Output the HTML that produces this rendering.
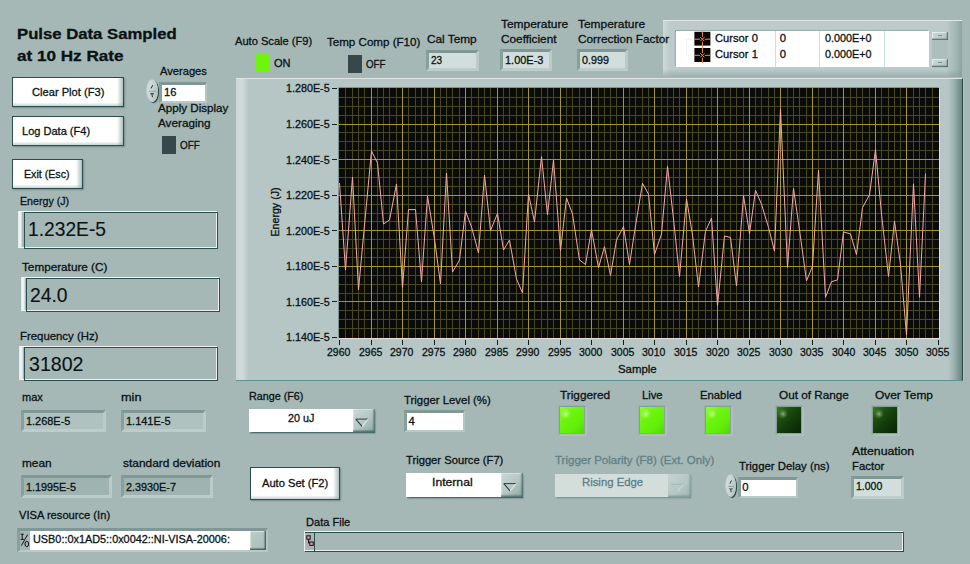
<!DOCTYPE html>
<html lang="en">
<head>
<meta charset="utf-8">
<title>Pulse Data Sampled at 10 Hz Rate</title>
<style>
html,body{margin:0;padding:0}
body{width:970px;height:564px;overflow:hidden;background:#a5b8b6;font-family:"Liberation Sans", sans-serif;color:#0a1214}
#panel{position:relative;width:970px;height:564px;overflow:hidden;background:#a5b8b6}
#panel div,#panel i,#panel span,#panel svg{position:absolute;display:block;box-sizing:border-box}
.t{line-height:1;white-space:nowrap;font-style:normal;transform-origin:0 0;-webkit-text-stroke:.3px currentColor;z-index:5}
/* push buttons */
.btn{background:
  linear-gradient(to right,rgba(140,165,163,0) calc(100% - 6px),rgba(140,165,163,.7)),
  linear-gradient(to bottom,rgba(140,165,163,0) calc(100% - 3.5px),rgba(140,165,163,.5)),#fff;
  border:1.4px solid #2c4d4e;box-shadow:1px 1px 1.5px rgba(60,90,90,.45)}
/* etched indicators */
.ind .strip{left:0;top:0;width:4px;bottom:1px;background:linear-gradient(to right,#dfe7e5,#f3f6f5 45%,#eaefee 70%,#c5d2cf)}
.ind .lt{left:0;top:0;right:1px;bottom:1px;border:1px solid #eef3f2;border-left:none}
.ind .dk{top:1px;right:0;bottom:0;border:1.3px solid #2c4d4e}
/* sunken numerics */
.num{border-style:solid;border-width:3px;border-color:#7f9896 #bccac8 #bfcdca #86a09d;background:#b0c2bf}
.num.dkf{background:#9fb3b0}
.num.ltf{background:#d2dedb}
.inp{border-style:solid;border-width:3px 2.9px 2.8px 3px;border-color:#7f9896 #b4c5c2 #b9c9c6 #86a09d;background:#fff}
.led{box-shadow:0 0 0 1.3px rgba(125,150,147,.75),1.2px 1.2px 0 1.3px rgba(196,210,207,.7)}
.led.on{background:linear-gradient(135deg,#8cff2a 0%,#6df50e 35%,#62ee08 70%,#4fd807 100%)}
.led.off{background:linear-gradient(135deg,#3a8420 0%,#1e5410 25%,#133c09 55%,#0a2404 100%)}
.led.off i{opacity:.85}
.led i{left:1px;top:2px;width:10px;height:10px;border-radius:50%;background:radial-gradient(closest-side,rgba(255,255,255,.6),rgba(255,255,255,.25) 45%,rgba(255,255,255,0))}
.spin{border-radius:50%;background:linear-gradient(100deg,#d9e2e0,#c3d0cd 60%,#a9bbb8);box-shadow:1.1px 1px .9px rgba(22,50,50,.9),-0.5px -0.5px 1px rgba(225,235,233,.8)}
.ring{background:#fff;box-shadow:0.5px 1.5px 1.5px rgba(45,80,80,.75)}
.ring .rb{right:0;top:0;bottom:0;background:linear-gradient(135deg,#ccd8d5 0%,#b4c5c2 55%,#8ea5a2 100%);box-shadow:inset -1.5px -1.5px 1.5px rgba(50,85,85,.7),inset 1px 1px 1px rgba(235,242,240,.6)}
.ring.dis{background:#d3dedb;box-shadow:0.5px 1.5px 1.5px rgba(90,125,125,.55)}
.ring.dis .rb{background:linear-gradient(135deg,#c7d4d1,#b5c6c3 60%,#a0b5b2);box-shadow:inset -1.5px -1.5px 1.5px rgba(90,125,125,.5)}
/* graph */
#graph{left:235.6px;top:78px;width:727.4px;height:303px;background:
  linear-gradient(to right,#cbd6d4 0,#d1dbdb 6px,#c6d3d2 9px,#b5c6c5 12.5px,#b5c6c5 calc(100% - 14px),#9db1af calc(100% - 8px),#6e8786 calc(100% - 1px));
  border-top:1.5px solid #dde6e4;border-bottom:1.5px solid #5f9191;border-right:1.2px solid #294a4b;box-shadow:1px 0 0 rgba(205,190,190,.6)}
#plot{left:338.5px;top:87.6px;width:600.5px;height:250.2px;background:#0b0c0a;box-shadow:1px 1px 0 #e9dcdc,-0.6px -0.6px 0 #56706f}
.tk{background:#10201f}
#legend{left:663px;top:19.8px;width:298.5px;height:57.4px;background:
  linear-gradient(to bottom,rgba(130,155,152,0) calc(100% - 8px),rgba(130,155,152,.55) 100%),
  linear-gradient(to right,#cfdad8 0,#bccbc9 7px,#bccbc9 calc(100% - 16px),#9fb4b1 calc(100% - 5px),#8ca3a0 100%);
  border-top:1.5px solid #dfe8e6}
#legend .tb{left:12.6px;top:10.1px;width:253.4px;height:36.4px;background:#fff;box-shadow:-1px -1.5px 1px rgba(90,125,125,.7)}
#legend .cl{top:0;bottom:0;width:1px;background:#bfe3e6}
#legend .sb{left:269px;width:15.6px;height:8.6px;background:linear-gradient(135deg,#ccd8d5,#b3c4c1);box-shadow:inset -1.2px -1.2px 1px rgba(50,85,85,.75),inset 1px 1px 1px rgba(235,242,240,.8)}
#legend .sb i{left:5.5px;top:3.4px;width:4px;height:1px;background:#7d9795}
</style>
</head>
<body>
<div id="panel">

<!-- title -->
<span class="t" style="left:17.4px;top:26.9px;font-size:14.3px;transform:scaleX(1.168);font-weight:700">Pulse Data Sampled</span>
<span class="t" style="left:17.4px;top:49.2px;font-size:14.3px;transform:scaleX(1.197);font-weight:700">at 10 Hz Rate</span>

<!-- push buttons -->
<div class="btn" style="left:12px;top:77.2px;width:112.3px;height:29.8px"></div><span class="t" style="left:31.6px;top:87.13px;font-size:11.3px;transform:scaleX(0.985)">Clear Plot (F3)</span>
<div class="btn" style="left:12px;top:116.4px;width:112.3px;height:29.4px"></div><span class="t" style="left:21.7px;top:125.53px;font-size:11.3px;transform:scaleX(0.977)">Log Data (F4)</span>
<div class="btn" style="left:12px;top:159px;width:71px;height:30px"></div><span class="t" style="left:24.2px;top:169.23px;font-size:11.3px;transform:scaleX(0.943)">Exit (Esc)</span>
<div class="btn" style="left:250px;top:466.8px;width:90.2px;height:33.2px"></div><span class="t" style="left:261.7px;top:478.03px;font-size:11.3px;transform:scaleX(0.985)">Auto Set (F2)</span>

<!-- averages -->
<span class="t" style="left:159.8px;top:65.53px;font-size:11.3px;transform:scaleX(0.986)">Averages</span>
<div class="spin" style="left:147.3px;top:80.2px;width:10.699999999999989px;height:22.0px"><svg width="10.699999999999989" height="22.0" viewBox="0 0 11 22"><path d="M2 11.2h7" stroke="#7d9593" stroke-width=".8"/><path d="M3.6 8.2 5.7 4.6 6.4 5 4.6 8.4zM3.4 13.4h3.8v.9H5.6l.5 3-.9.2-.7-3.2H3.4z" fill="#1d3436"/></svg></div>
<div class="inp" style="left:159px;top:81.6px;width:48px;height:21.8px"></div><span class="t" style="left:163.5px;top:86.73px;font-size:11.3px;transform:scaleX(0.985)">16</span>
<span class="t" style="left:157.9px;top:102.83px;font-size:11.3px;transform:scaleX(1.028)">Apply Display</span>
<span class="t" style="left:157.7px;top:118.33px;font-size:11.3px;transform:scaleX(1.038)">Averaging</span>
<div class="sq" style="left:162px;top:136.2px;width:14px;height:17.5px;background:#37474a"></div><span class="t" style="left:179.6px;top:139.73px;font-size:11.3px;transform:scaleX(0.877)">OFF</span>

<!-- big indicators -->
<span class="t" style="left:19.9px;top:195.93px;font-size:11.3px;transform:scaleX(0.942)">Energy (J)</span>
<div class="ind" style="left:18.4px;top:211px;width:200.0px;height:38px"><i class="strip"></i><i class="lt"></i><i class="dk" style="left:5.600000000000001px"></i></div><span class="t" style="left:28.23px;top:219.84px;font-size:19.8px;transform:scaleX(0.971);-webkit-text-stroke-width:.12px">1.232E-5</span>
<span class="t" style="left:21.8px;top:261.93px;font-size:11.3px;transform:scaleX(1.038)">Temperature (C)</span>
<div class="ind" style="left:20.8px;top:277px;width:199.6px;height:35px"><i class="strip"></i><i class="lt"></i><i class="dk" style="left:5.199999999999999px"></i></div><span class="t" style="left:30.12px;top:286.04px;font-size:19.8px;transform:scaleX(0.976);-webkit-text-stroke-width:.12px">24.0</span>
<span class="t" style="left:19.7px;top:330.93px;font-size:11.3px;transform:scaleX(1.007)">Frequency (Hz)</span>
<div class="ind" style="left:18.6px;top:346px;width:199.8px;height:35px"><i class="strip"></i><i class="lt"></i><i class="dk" style="left:5.599999999999998px"></i></div><span class="t" style="left:28.6px;top:354.74px;font-size:19.8px;transform:scaleX(0.989);-webkit-text-stroke-width:.12px">31802</span>

<!-- statistics -->
<span class="t" style="left:21.8px;top:391.93px;font-size:11.3px;transform:scaleX(0.973)">max</span><span class="t" style="left:121.4px;top:391.93px;font-size:11.3px;transform:scaleX(1.127)">min</span>
<div class="num" style="left:20.5px;top:410.3px;width:85.1px;height:21.69999999999999px"></div><span class="t" style="left:25.5px;top:416.13px;font-size:11.3px;transform:scaleX(0.968)">1.268E-5</span>
<div class="num" style="left:120.5px;top:410.3px;width:85.30000000000001px;height:21.69999999999999px"></div><span class="t" style="left:125.5px;top:416.13px;font-size:11.3px;transform:scaleX(0.972)">1.141E-5</span>
<span class="t" style="left:22.4px;top:457.83px;font-size:11.3px;transform:scaleX(1.044)">mean</span><span class="t" style="left:123.4px;top:457.83px;font-size:11.3px;transform:scaleX(1.054)">standard deviation</span>
<div class="num dkf" style="left:21.4px;top:475.4px;width:91.0px;height:22.600000000000023px"></div><span class="t" style="left:25.5px;top:481.63px;font-size:11.3px;transform:scaleX(0.957)">1.1995E-5</span>
<div class="num dkf" style="left:121.4px;top:475.4px;width:91.79999999999998px;height:22.80000000000001px"></div><span class="t" style="left:125.5px;top:481.63px;font-size:11.3px;transform:scaleX(0.957)">2.3930E-7</span>

<!-- VISA resource -->
<span class="t" style="left:18.5px;top:510.13px;font-size:11.3px;transform:scaleX(0.987)">VISA resource (In)</span>
<div class="inp" style="left:17px;top:527.6px;width:251px;height:24.6px;background:#a5b8b6">
  <svg style="left:-0.6px;top:1.6px" width="12" height="17" viewBox="0 0 12 17"><path d="M1.6 2.2h3.2M3.2 2.2v5.2M1.6 7.4h3.2" stroke="#111" stroke-width="1" fill="none"/><path d="M8.6 2.6 2.4 13.6" stroke="#111" stroke-width="1"/><ellipse cx="7.8" cy="12" rx="1.8" ry="2.7" fill="none" stroke="#111" stroke-width="1"/></svg>
  <div style="left:10.4px;top:0.8px;width:219.2px;height:18.6px;background:#fff"></div>
  <div style="left:229.6px;top:0.8px;width:16.6px;height:18.8px;background:linear-gradient(135deg,#bccbc8,#aabcb9);box-shadow:inset -1.4px -1.4px 1px rgba(40,75,75,.8),inset 1px 1px 1px rgba(235,242,240,.7)"></div>
</div>
<span class="t" style="left:32.9px;top:534.23px;font-size:11.3px;transform:scaleX(0.962)">USB0::0x1AD5::0x0042::NI-VISA-20006:</span>

<!-- top row -->
<span class="t" style="left:234.7px;top:35.83px;font-size:11.3px;transform:scaleX(0.984)">Auto Scale (F9)</span>
<div class="sq" style="left:255.8px;top:53.6px;width:14.5px;height:18.5px;background:#6ef40d"></div><span class="t" style="left:273.9px;top:57.83px;font-size:11.3px;transform:scaleX(0.977)">ON</span>
<span class="t" style="left:327.4px;top:37.13px;font-size:11.3px;transform:scaleX(1.025)">Temp Comp (F10)</span>
<div class="sq" style="left:348.2px;top:55px;width:14px;height:17.7px;background:#37474a"></div><span class="t" style="left:366.0px;top:59.03px;font-size:11.3px;transform:scaleX(0.86)">OFF</span>
<span class="t" style="left:426.8px;top:33.93px;font-size:11.3px;transform:scaleX(1.046)">Cal Temp</span>
<div class="num ltf" style="left:426px;top:49.6px;width:53.39999999999998px;height:21.800000000000004px"></div><span class="t" style="left:431.1px;top:55.03px;font-size:11.3px;transform:scaleX(0.887)">23</span>
<span class="t" style="left:500.8px;top:19.03px;font-size:11.3px;transform:scaleX(1.058)">Temperature</span><span class="t" style="left:500.8px;top:33.83px;font-size:11.3px;transform:scaleX(1.044)">Coefficient</span>
<div class="num ltf" style="left:500.2px;top:49.4px;width:52.00000000000006px;height:21.6px"></div><span class="t" style="left:504.8px;top:55.13px;font-size:11.3px;transform:scaleX(0.97)">1.00E-3</span>
<span class="t" style="left:577.6px;top:19.03px;font-size:11.3px;transform:scaleX(1.058)">Temperature</span><span class="t" style="left:577.6px;top:33.83px;font-size:11.3px;transform:scaleX(1.045)">Correction Factor</span>
<div class="num ltf" style="left:576.8px;top:49.4px;width:51.40000000000009px;height:21.6px"></div><span class="t" style="left:581.8px;top:55.13px;font-size:11.3px;transform:scaleX(0.95)">0.999</span>

<!-- cursor legend -->
<div id="legend">
  <div class="tb">
    <i class="cl" style="left:99px"></i><i class="cl" style="left:143.6px"></i><i class="cl" style="left:208.6px"></i>
    <svg style="left:9px;top:-1.2px" width="27" height="34" viewBox="0 0 27 34">
      <path d="M6 9.2H1.6V25.3H6" fill="none" stroke="#bfeaf0" stroke-width="1" stroke-dasharray="1 1"/>
      <rect x="9.4" y="1.8" width="16" height="13.8" fill="#050505"/><rect x="9.4" y="18" width="16" height="14" fill="#050505"/>
      <g stroke="#ff9326" stroke-width="1" fill="none">
        <path d="M17.4 .8V6.8M17.4 11.6V22.9M17.4 27.7V33M9.4 9.2H15M19.8 9.2H25.4M9.4 25.3H15M19.8 25.3H25.4"/>
        <path d="M15.4 7.2l4 4M19.4 7.2l-4 4M15.4 23.3l4 4M19.4 23.3l-4 4"/>
      </g>
    </svg>
  </div>
  <div style="left:269px;top:11px;width:15.6px;height:36px;background:#adbfbc"></div>
  <div class="sb" style="top:11px"><i></i></div>
  <div class="sb" style="top:37.8px"><i></i></div>
</div>
<span class="t" style="left:714.7px;top:32.93px;font-size:11.3px;transform:scaleX(0.99)">Cursor 0</span><span class="t" style="left:714.7px;top:49.13px;font-size:11.3px;transform:scaleX(0.99)">Cursor 1</span><span class="t" style="left:779.7px;top:32.93px;font-size:11.3px">0</span><span class="t" style="left:779.7px;top:49.13px;font-size:11.3px">0</span><span class="t" style="left:825.0px;top:32.93px;font-size:11.3px;transform:scaleX(0.955)">0.000E+0</span><span class="t" style="left:825.0px;top:49.13px;font-size:11.3px;transform:scaleX(0.955)">0.000E+0</span>

<!-- waveform graph -->
<div id="graph"></div>
<div id="plot">
<svg width="602" height="252" viewBox="0 0 602 252" style="left:-0.5px;top:-0.6px">
<g stroke-width="1" shape-rendering="crispEdges">
<path d="M7.5 1V251" stroke="#48481f"/>
<path d="M14.5 1V251" stroke="#48481f"/>
<path d="M20.5 1V251" stroke="#48481f"/>
<path d="M26.5 1V251" stroke="#48481f"/>
<path d="M39.5 1V251" stroke="#48481f"/>
<path d="M45.5 1V251" stroke="#48481f"/>
<path d="M51.5 1V251" stroke="#48481f"/>
<path d="M58.5 1V251" stroke="#48481f"/>
<path d="M70.5 1V251" stroke="#48481f"/>
<path d="M77.5 1V251" stroke="#48481f"/>
<path d="M83.5 1V251" stroke="#48481f"/>
<path d="M89.5 1V251" stroke="#48481f"/>
<path d="M102.5 1V251" stroke="#48481f"/>
<path d="M108.5 1V251" stroke="#48481f"/>
<path d="M114.5 1V251" stroke="#48481f"/>
<path d="M121.5 1V251" stroke="#48481f"/>
<path d="M133.5 1V251" stroke="#48481f"/>
<path d="M140.5 1V251" stroke="#48481f"/>
<path d="M146.5 1V251" stroke="#48481f"/>
<path d="M152.5 1V251" stroke="#48481f"/>
<path d="M165.5 1V251" stroke="#48481f"/>
<path d="M171.5 1V251" stroke="#48481f"/>
<path d="M178.5 1V251" stroke="#48481f"/>
<path d="M184.5 1V251" stroke="#48481f"/>
<path d="M196.5 1V251" stroke="#48481f"/>
<path d="M203.5 1V251" stroke="#48481f"/>
<path d="M209.5 1V251" stroke="#48481f"/>
<path d="M215.5 1V251" stroke="#48481f"/>
<path d="M228.5 1V251" stroke="#48481f"/>
<path d="M234.5 1V251" stroke="#48481f"/>
<path d="M241.5 1V251" stroke="#48481f"/>
<path d="M247.5 1V251" stroke="#48481f"/>
<path d="M260.5 1V251" stroke="#48481f"/>
<path d="M266.5 1V251" stroke="#48481f"/>
<path d="M272.5 1V251" stroke="#48481f"/>
<path d="M278.5 1V251" stroke="#48481f"/>
<path d="M291.5 1V251" stroke="#48481f"/>
<path d="M297.5 1V251" stroke="#48481f"/>
<path d="M304.5 1V251" stroke="#48481f"/>
<path d="M310.5 1V251" stroke="#48481f"/>
<path d="M323.5 1V251" stroke="#48481f"/>
<path d="M329.5 1V251" stroke="#48481f"/>
<path d="M335.5 1V251" stroke="#48481f"/>
<path d="M341.5 1V251" stroke="#48481f"/>
<path d="M354.5 1V251" stroke="#48481f"/>
<path d="M360.5 1V251" stroke="#48481f"/>
<path d="M367.5 1V251" stroke="#48481f"/>
<path d="M373.5 1V251" stroke="#48481f"/>
<path d="M386.5 1V251" stroke="#48481f"/>
<path d="M392.5 1V251" stroke="#48481f"/>
<path d="M398.5 1V251" stroke="#48481f"/>
<path d="M405.5 1V251" stroke="#48481f"/>
<path d="M417.5 1V251" stroke="#48481f"/>
<path d="M423.5 1V251" stroke="#48481f"/>
<path d="M430.5 1V251" stroke="#48481f"/>
<path d="M436.5 1V251" stroke="#48481f"/>
<path d="M449.5 1V251" stroke="#48481f"/>
<path d="M455.5 1V251" stroke="#48481f"/>
<path d="M461.5 1V251" stroke="#48481f"/>
<path d="M468.5 1V251" stroke="#48481f"/>
<path d="M480.5 1V251" stroke="#48481f"/>
<path d="M487.5 1V251" stroke="#48481f"/>
<path d="M493.5 1V251" stroke="#48481f"/>
<path d="M499.5 1V251" stroke="#48481f"/>
<path d="M512.5 1V251" stroke="#48481f"/>
<path d="M518.5 1V251" stroke="#48481f"/>
<path d="M524.5 1V251" stroke="#48481f"/>
<path d="M531.5 1V251" stroke="#48481f"/>
<path d="M543.5 1V251" stroke="#48481f"/>
<path d="M550.5 1V251" stroke="#48481f"/>
<path d="M556.5 1V251" stroke="#48481f"/>
<path d="M562.5 1V251" stroke="#48481f"/>
<path d="M575.5 1V251" stroke="#48481f"/>
<path d="M581.5 1V251" stroke="#48481f"/>
<path d="M587.5 1V251" stroke="#48481f"/>
<path d="M594.5 1V251" stroke="#48481f"/>
<path d="M1 10.5H601" stroke="#48481f"/>
<path d="M1 19.5H601" stroke="#48481f"/>
<path d="M1 28.5H601" stroke="#48481f"/>
<path d="M1 45.5H601" stroke="#48481f"/>
<path d="M1 54.5H601" stroke="#48481f"/>
<path d="M1 63.5H601" stroke="#48481f"/>
<path d="M1 81.5H601" stroke="#48481f"/>
<path d="M1 90.5H601" stroke="#48481f"/>
<path d="M1 99.5H601" stroke="#48481f"/>
<path d="M1 117.5H601" stroke="#48481f"/>
<path d="M1 126.5H601" stroke="#48481f"/>
<path d="M1 134.5H601" stroke="#48481f"/>
<path d="M1 152.5H601" stroke="#48481f"/>
<path d="M1 161.5H601" stroke="#48481f"/>
<path d="M1 170.5H601" stroke="#48481f"/>
<path d="M1 188.5H601" stroke="#48481f"/>
<path d="M1 197.5H601" stroke="#48481f"/>
<path d="M1 206.5H601" stroke="#48481f"/>
<path d="M1 223.5H601" stroke="#48481f"/>
<path d="M1 232.5H601" stroke="#48481f"/>
<path d="M1 241.5H601" stroke="#48481f"/>
<path d="M33.5 1V251" stroke="#a5952f"/>
<path d="M64.5 1V251" stroke="#a5952f"/>
<path d="M96.5 1V251" stroke="#a5952f"/>
<path d="M127.5 1V251" stroke="#a5952f"/>
<path d="M159.5 1V251" stroke="#a5952f"/>
<path d="M190.5 1V251" stroke="#a5952f"/>
<path d="M222.5 1V251" stroke="#a5952f"/>
<path d="M253.5 1V251" stroke="#a5952f"/>
<path d="M285.5 1V251" stroke="#a5952f"/>
<path d="M316.5 1V251" stroke="#a5952f"/>
<path d="M348.5 1V251" stroke="#a5952f"/>
<path d="M379.5 1V251" stroke="#a5952f"/>
<path d="M411.5 1V251" stroke="#a5952f"/>
<path d="M442.5 1V251" stroke="#a5952f"/>
<path d="M474.5 1V251" stroke="#a5952f"/>
<path d="M505.5 1V251" stroke="#a5952f"/>
<path d="M537.5 1V251" stroke="#a5952f"/>
<path d="M568.5 1V251" stroke="#a5952f"/>
<path d="M1 37.5H601" stroke="#a5952f"/>
<path d="M1 72.5H601" stroke="#a5952f"/>
<path d="M1 108.5H601" stroke="#a5952f"/>
<path d="M1 143.5H601" stroke="#a5952f"/>
<path d="M1 179.5H601" stroke="#a5952f"/>
<path d="M1 214.5H601" stroke="#a5952f"/>
</g>
<polyline points="1.5,96.0 7.5,183.0 14.5,90.0 20.5,203.0 26.5,138.0 33.5,64.0 39.5,76.0 45.5,137.0 51.5,133.0 58.5,97.0 64.5,201.0 70.5,122.6 77.5,122.6 83.5,195.0 89.5,109.0 96.5,152.0 102.5,197.0 108.5,86.0 114.5,185.0 121.5,173.0 127.5,124.0 133.5,140.0 140.5,166.0 146.5,88.0 152.5,143.5 159.5,126.5 165.5,163.0 171.5,153.0 178.5,192.0 184.5,206.0 190.5,107.0 196.5,135.0 203.5,69.6 209.5,128.0 215.5,73.0 222.5,163.6 228.5,111.0 234.5,127.0 241.5,173.0 247.5,177.5 253.5,142.7 260.5,180.6 266.5,159.7 272.5,188.5 278.5,153.0 285.5,139.6 291.5,177.5 297.5,139.0 304.5,96.3 310.5,107.2 316.5,167.5 323.5,147.0 329.5,79.3 335.5,132.0 341.5,189.5 348.5,111.8 354.5,148.0 360.5,200.0 367.5,144.3 373.5,131.0 379.5,218.5 386.5,149.0 392.5,150.5 398.5,199.0 405.5,108.7 411.5,146.6 417.5,103.3 423.5,117.2 430.5,140.4 436.5,164.2 442.5,22.0 449.5,180.3 455.5,101.4 461.5,143.0 468.5,193.8 474.5,179.3 480.5,83.0 487.5,210.3 493.5,194.7 499.5,192.9 505.5,145.0 512.5,146.9 518.5,167.6 524.5,120.7 531.5,107.8 537.5,62.6 543.5,127.0 550.5,189.5 556.5,134.2 562.5,177.5 568.5,248.0 575.5,96.8 581.5,210.3 587.5,86.6" fill="none" stroke="#f6aaa4" stroke-width="1" stroke-linejoin="miter"/>
</svg>
</div>
<i class="tk" style="left:332px;top:88px;width:5px;height:1px"></i>
<i class="tk" style="left:332px;top:124px;width:5px;height:1px"></i>
<i class="tk" style="left:332px;top:159px;width:5px;height:1px"></i>
<i class="tk" style="left:332px;top:195px;width:5px;height:1px"></i>
<i class="tk" style="left:332px;top:230px;width:5px;height:1px"></i>
<i class="tk" style="left:332px;top:266px;width:5px;height:1px"></i>
<i class="tk" style="left:332px;top:301px;width:5px;height:1px"></i>
<i class="tk" style="left:332px;top:337px;width:5px;height:1px"></i>
<i class="tk" style="left:339px;top:340px;width:1px;height:5px"></i>
<i class="tk" style="left:371px;top:340px;width:1px;height:5px"></i>
<i class="tk" style="left:402px;top:340px;width:1px;height:5px"></i>
<i class="tk" style="left:434px;top:340px;width:1px;height:5px"></i>
<i class="tk" style="left:465px;top:340px;width:1px;height:5px"></i>
<i class="tk" style="left:497px;top:340px;width:1px;height:5px"></i>
<i class="tk" style="left:528px;top:340px;width:1px;height:5px"></i>
<i class="tk" style="left:560px;top:340px;width:1px;height:5px"></i>
<i class="tk" style="left:591px;top:340px;width:1px;height:5px"></i>
<i class="tk" style="left:623px;top:340px;width:1px;height:5px"></i>
<i class="tk" style="left:654px;top:340px;width:1px;height:5px"></i>
<i class="tk" style="left:686px;top:340px;width:1px;height:5px"></i>
<i class="tk" style="left:717px;top:340px;width:1px;height:5px"></i>
<i class="tk" style="left:749px;top:340px;width:1px;height:5px"></i>
<i class="tk" style="left:780px;top:340px;width:1px;height:5px"></i>
<i class="tk" style="left:812px;top:340px;width:1px;height:5px"></i>
<i class="tk" style="left:843px;top:340px;width:1px;height:5px"></i>
<i class="tk" style="left:875px;top:340px;width:1px;height:5px"></i>
<i class="tk" style="left:906px;top:340px;width:1px;height:5px"></i>
<i class="tk" style="left:938px;top:340px;width:1px;height:5px"></i>
<span class="t" style="left:285.9px;top:83.43px;font-size:11.3px;transform:scaleX(0.952)">1.280E-5</span>
<span class="t" style="left:285.9px;top:119.01px;font-size:11.3px;transform:scaleX(0.952)">1.260E-5</span>
<span class="t" style="left:285.9px;top:154.58px;font-size:11.3px;transform:scaleX(0.952)">1.240E-5</span>
<span class="t" style="left:285.9px;top:190.15px;font-size:11.3px;transform:scaleX(0.952)">1.220E-5</span>
<span class="t" style="left:285.9px;top:225.72px;font-size:11.3px;transform:scaleX(0.952)">1.200E-5</span>
<span class="t" style="left:285.9px;top:261.29px;font-size:11.3px;transform:scaleX(0.952)">1.180E-5</span>
<span class="t" style="left:285.9px;top:296.86px;font-size:11.3px;transform:scaleX(0.952)">1.160E-5</span>
<span class="t" style="left:285.9px;top:332.43px;font-size:11.3px;transform:scaleX(0.952)">1.140E-5</span>
<span class="t" style="left:327.2px;top:346.83px;font-size:11.3px;transform:scaleX(0.926)">2960</span>
<span class="t" style="left:358.73px;top:346.83px;font-size:11.3px;transform:scaleX(0.926)">2965</span>
<span class="t" style="left:390.25px;top:346.83px;font-size:11.3px;transform:scaleX(0.926)">2970</span>
<span class="t" style="left:421.78px;top:346.83px;font-size:11.3px;transform:scaleX(0.926)">2975</span>
<span class="t" style="left:453.31px;top:346.83px;font-size:11.3px;transform:scaleX(0.926)">2980</span>
<span class="t" style="left:484.83px;top:346.83px;font-size:11.3px;transform:scaleX(0.926)">2985</span>
<span class="t" style="left:516.36px;top:346.83px;font-size:11.3px;transform:scaleX(0.926)">2990</span>
<span class="t" style="left:547.88px;top:346.83px;font-size:11.3px;transform:scaleX(0.926)">2995</span>
<span class="t" style="left:579.41px;top:346.83px;font-size:11.3px;transform:scaleX(0.926)">3000</span>
<span class="t" style="left:610.94px;top:346.83px;font-size:11.3px;transform:scaleX(0.926)">3005</span>
<span class="t" style="left:642.46px;top:346.83px;font-size:11.3px;transform:scaleX(0.926)">3010</span>
<span class="t" style="left:673.99px;top:346.83px;font-size:11.3px;transform:scaleX(0.926)">3015</span>
<span class="t" style="left:705.52px;top:346.83px;font-size:11.3px;transform:scaleX(0.926)">3020</span>
<span class="t" style="left:737.04px;top:346.83px;font-size:11.3px;transform:scaleX(0.926)">3025</span>
<span class="t" style="left:768.57px;top:346.83px;font-size:11.3px;transform:scaleX(0.926)">3030</span>
<span class="t" style="left:800.09px;top:346.83px;font-size:11.3px;transform:scaleX(0.926)">3035</span>
<span class="t" style="left:831.62px;top:346.83px;font-size:11.3px;transform:scaleX(0.926)">3040</span>
<span class="t" style="left:863.15px;top:346.83px;font-size:11.3px;transform:scaleX(0.926)">3045</span>
<span class="t" style="left:894.67px;top:346.83px;font-size:11.3px;transform:scaleX(0.926)">3050</span>
<span class="t" style="left:926.2px;top:346.83px;font-size:11.3px;transform:scaleX(0.926)">3055</span>
<span class="t" id="ylabel" style="left:276.4px;top:212.4px;font-size:11.3px;transform-origin:50% 50%;transform:translate(-50%,-50%) rotate(-90deg) scaleX(0.942)">Energy (J)</span>
<span class="t" style="left:618.4px;top:363.83px;font-size:11.3px;transform:scaleX(1.01)">Sample</span>

<!-- range / trigger -->
<span class="t" style="left:248.6px;top:391.03px;font-size:11.3px;transform:scaleX(0.952)">Range (F6)</span>
<div class="ring" style="left:249.2px;top:408.6px;width:126.0px;height:23.0px"><div class="rb" style="width:22.19999999999999px"><svg width="22.2" height="23.0" viewBox="0 0 22.2 23.0"><path d="M2.6 10.1H15.0" stroke="#24403f" stroke-width="1"/><path d="M3.0 10.4L9.1 17.4" stroke="#24403f" stroke-width="1.1" fill="none"/><path d="M14.8 10.4L9.3 17.4" stroke="#dfe8e6" stroke-width="1.1" fill="none"/></svg></div></div><span class="t" style="left:288.1px;top:412.83px;font-size:11.3px;transform:scaleX(0.952)">20 uJ</span>
<span class="t" style="left:404.4px;top:394.93px;font-size:11.3px;transform:scaleX(1.006)">Trigger Level (%)</span>
<div class="inp" style="left:404.4px;top:410.4px;width:61px;height:21.8px"></div><span class="t" style="left:408.5px;top:416.33px;font-size:11.3px">4</span>

<span class="t" style="left:559.9px;top:389.93px;font-size:11.3px;transform:scaleX(1.047)">Triggered</span><div class="led on" style="left:559.8px;top:406.6px;width:24.200000000000045px;height:26.19999999999999px"><i></i></div>
<span class="t" style="left:641.7px;top:389.93px;font-size:11.3px;transform:scaleX(0.993)">Live</span><div class="led on" style="left:639.8px;top:406.6px;width:24.600000000000023px;height:26.19999999999999px"><i></i></div>
<span class="t" style="left:700.4px;top:389.93px;font-size:11.3px;transform:scaleX(1.001)">Enabled</span><div class="led on" style="left:705.8px;top:406.6px;width:24.200000000000045px;height:26.19999999999999px"><i></i></div>
<span class="t" style="left:778.6px;top:389.93px;font-size:11.3px;transform:scaleX(1.039)">Out of Range</span><div class="led off" style="left:776.8px;top:406.8px;width:24.0px;height:25.80000000000001px"><i></i></div>
<span class="t" style="left:874.6px;top:389.93px;font-size:11.3px;transform:scaleX(1.053)">Over Temp</span><div class="led off" style="left:872.8px;top:406.8px;width:24.200000000000045px;height:25.80000000000001px"><i></i></div>

<span class="t" style="left:406.3px;top:454.93px;font-size:11.3px;transform:scaleX(0.992)">Trigger Source (F7)</span>
<div class="ring" style="left:406.4px;top:473.4px;width:116.80000000000007px;height:24.0px"><div class="rb" style="width:22.200000000000045px"><svg width="22.2" height="24.0" viewBox="0 0 22.2 24.0"><path d="M2.6 10.6H15.0" stroke="#24403f" stroke-width="1"/><path d="M3.0 10.9L9.1 17.9" stroke="#24403f" stroke-width="1.1" fill="none"/><path d="M14.8 10.9L9.3 17.9" stroke="#dfe8e6" stroke-width="1.1" fill="none"/></svg></div></div><span class="t" style="left:432.12px;top:477.03px;font-size:11.3px;transform:scaleX(1.078)">Internal</span>
<span class="t" style="left:554.9px;top:454.93px;font-size:11.3px;transform:scaleX(1.018);color:#5f8084">Trigger Polarity (F8) (Ext. Only)</span>
<div class="ring dis" style="left:555.4px;top:473.6px;width:135.39999999999998px;height:23.399999999999977px"><div class="rb" style="width:22.799999999999955px"><svg width="22.8" height="23.4" viewBox="0 0 22.8 23.4"><path d="M2.9 10.3H15.3" stroke="#a3b8b7" stroke-width="1"/><path d="M3.3 10.6L9.4 17.6" stroke="#b3c5c3" stroke-width="1.1" fill="none"/><path d="M15.1 10.6L9.6 17.6" stroke="#c9d6d4" stroke-width="1.1" fill="none"/></svg></div></div><span class="t" style="left:581.6px;top:476.73px;font-size:11.3px;transform:scaleX(1.003);color:#5c7f86">Rising Edge</span>
<span class="t" style="left:738.7px;top:461.43px;font-size:11.3px;transform:scaleX(1.005)">Trigger Delay (ns)</span>
<div class="spin" style="left:726px;top:474.8px;width:10.200000000000045px;height:22.399999999999977px"><svg width="10.200000000000045" height="22.399999999999977" viewBox="0 0 11 22"><path d="M2 11.2h7" stroke="#7d9593" stroke-width=".8"/><path d="M3.6 8.2 5.7 4.6 6.4 5 4.6 8.4zM3.4 13.4h3.8v.9H5.6l.5 3-.9.2-.7-3.2H3.4z" fill="#1d3436"/></svg></div>
<div class="inp" style="left:737.8px;top:476.6px;width:60.4px;height:21.2px"></div><span class="t" style="left:742.15px;top:482.03px;font-size:11.3px">0</span>
<span class="t" style="left:851.6px;top:445.93px;font-size:11.3px;transform:scaleX(1.087)">Attenuation</span><span class="t" style="left:851.6px;top:460.83px;font-size:11.3px;transform:scaleX(1.008)">Factor</span>
<div class="num ltf" style="left:850.6px;top:476.2px;width:53.19999999999993px;height:22.80000000000001px"></div><span class="t" style="left:855.7px;top:481.43px;font-size:11.3px;transform:scaleX(0.929)">1.000</span>

<!-- data file -->
<span class="t" style="left:305.7px;top:516.83px;font-size:11.3px;transform:scaleX(0.979)">Data File</span>
<div class="ind" style="left:304.4px;top:531.4px;width:599.6px;height:20.4px">
  <i class="lt" style="border-left:1px solid #eef3f2"></i><i class="dk" style="left:1px;border-left:none"></i><i style="left:9.6px;top:1px;bottom:0;width:1.3px;background:#2c4d4e"></i>
  <svg style="left:1.2px;top:3.6px" width="9" height="13" viewBox="0 0 9 13"><path d="M2.6 3.6V8H5.4" stroke="#111" stroke-width="1.1" fill="none"/><rect x=".8" y=".8" width="3.4" height="3.4" fill="#f29a9a" stroke="#111" stroke-width="1"/><rect x="3.8" y="7" width="3.4" height="3.4" fill="#f29a9a" stroke="#111" stroke-width="1"/></svg>
</div>

</div>
</body>
</html>
